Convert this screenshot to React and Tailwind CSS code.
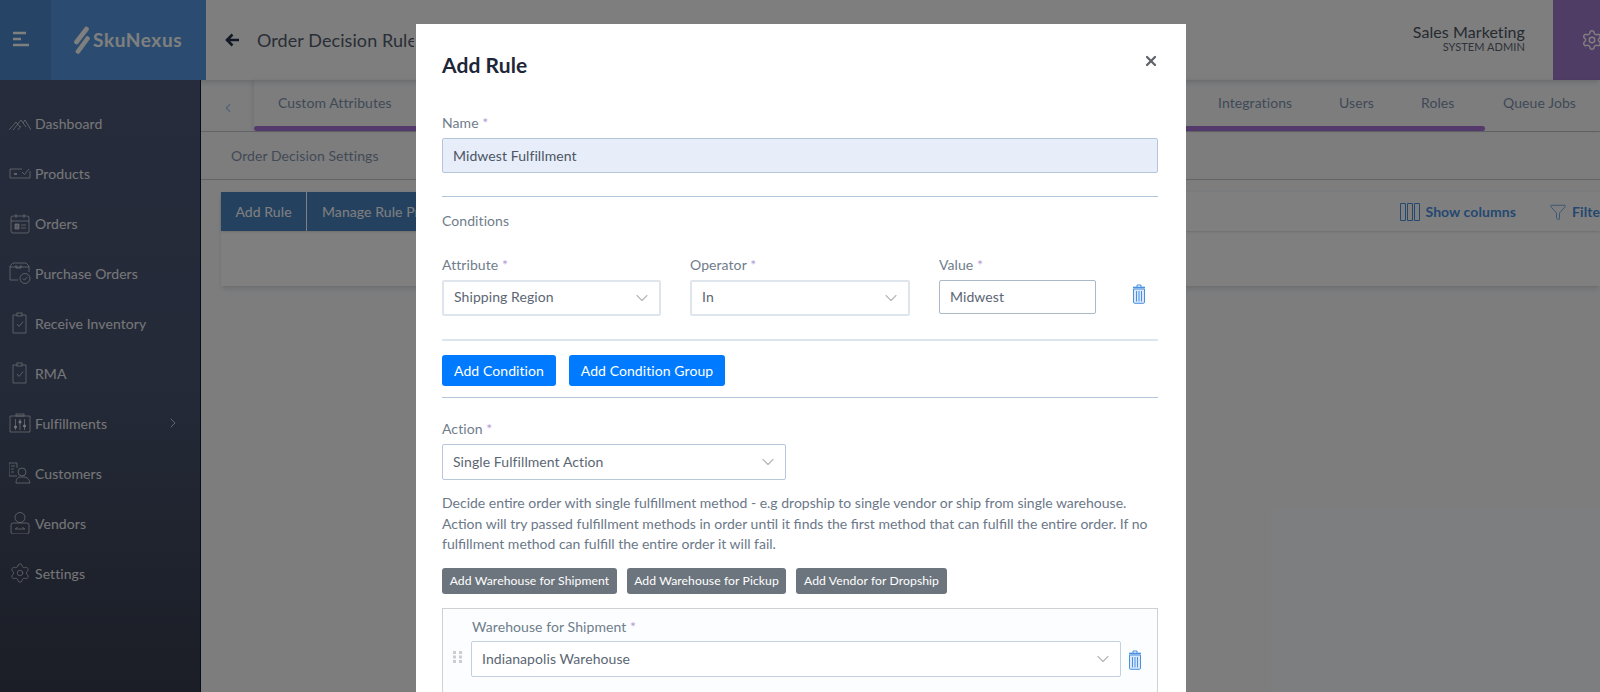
import { ChevronDown, ChevronLeft, ChevronRight, Settings, Filter, X } from 'lucide-react'

const sansFont = { fontFamily: 'Lato, "Open Sans", sans-serif', letterSpacing: '0.08px' }

function HamburgerIcon() {
  return (
    <svg width="18" height="16" viewBox="0 0 18 16" fill="none" stroke="#ffffff" strokeWidth="2.6">
      <path d="M1 2h13M1 8h8M1 14h16" />
    </svg>
  )
}

function LogoMark() {
  return (
    <svg width="17" height="28" viewBox="0 0 17 28" fill="none" stroke="#ffffff" strokeWidth="4.6" strokeLinecap="round">
      <path d="M13.5 3L3.5 16" />
      <path d="M14.5 12.5L5 25.5" />
    </svg>
  )
}

function NavIcon({ name }) {
  const common = { width: 22, height: 22, viewBox: '0 0 22 22', fill: 'none', stroke: '#ffffff', strokeOpacity: 0.75, strokeWidth: 0.9 }
  switch (name) {
    case 'dashboard':
      return (
        <svg {...common}>
          <path d="M0 18l7-8 4 5M4 18l8-10 5 7M9 18l3-4M14 11l2-3 6 10" />
        </svg>
      )
    case 'products':
      return (
        <svg {...common}>
          <path d="M13 7H1v9h20V9" />
          <path d="M5 12h3" strokeWidth="2" />
          <path d="M13 10l2.5 2.5L20 7" />
        </svg>
      )
    case 'orders':
      return (
        <svg {...common}>
          <rect x="2" y="4" width="18" height="17" rx="2" />
          <path d="M2 9h18M7 2v4M15 2v4" />
          <path d="M6 12h4v5H6z" fill="#ffffff" fillOpacity="0.6" />
          <path d="M12 13h5M12 16h5" />
        </svg>
      )
    case 'purchase':
      return (
        <svg {...common}>
          <path d="M9 18H1V4l3-3h13l3 3v6M1 5h19M7 3v3h5V3" />
          <circle cx="16" cy="16.5" r="5" />
          <path d="M13.8 16.5l1.6 1.6 2.8-3" />
        </svg>
      )
    case 'clipboard':
      return (
        <svg {...common}>
          <path d="M8 3H4v18h13V3h-4" />
          <rect x="8" y="1" width="5" height="3" />
          <path d="M8 12l2 2.5 4-5" />
        </svg>
      )
    case 'fulfillments':
      return (
        <svg {...common}>
          <path d="M1 4h20v16H1z" />
          <rect x="7" y="2" width="8" height="2" />
          <path d="M6.5 7v11M15.5 7v11M11 7v11" />
          <circle cx="6.5" cy="15" r="1.2" fill="#ffffff" />
          <circle cx="15.5" cy="14" r="1.2" fill="#ffffff" />
          <circle cx="11" cy="10" r="1.2" fill="#ffffff" />
        </svg>
      )
    case 'customers':
      return (
        <svg {...common}>
          <path d="M8 14H0V1h8v5M2 4h4M2 7h3M2 10h3" />
          <circle cx="13" cy="10" r="4" />
          <path d="M7 21c0-4 2-6 4-6h4c3 0 5 2 6 6z" />
        </svg>
      )
    case 'vendors':
      return (
        <svg {...common}>
          <circle cx="11" cy="5.5" r="5" />
          <path d="M4 11h14a2 2 0 0 1 2 2v7a2 2 0 0 1-2 2H4a2 2 0 0 1-2-2v-7a2 2 0 0 1 2-2z" />
          <path d="M6 17h10M8.5 15l-2 2M13.5 15l2 2" />
        </svg>
      )
    default:
      return <Settings size={22} strokeWidth={0.9} color="#ffffff" strokeOpacity={0.75} />
  }
}

function TrashIcon() {
  return (
    <svg width="14" height="20" viewBox="0 0 14 20" fill="none" stroke="#4a90e2" strokeWidth="1">
      <path d="M1 3.5h12" strokeWidth="1.6" />
      <path d="M5 3V1h4v2" />
      <path d="M1.5 5h11v13a1.3 1.3 0 0 1-1.3 1.3H2.8A1.3 1.3 0 0 1 1.5 18z" fill="#dbe9fa" />
      <path d="M4.5 7v10.5M7 7v10.5M9.5 7v10.5" />
    </svg>
  )
}

function Req({ children }) {
  return (
    <div className="h-5 text-[14px] leading-5 text-[#6f7d8c]">
      {children} <span className="text-[#b39ad6]">*</span>
    </div>
  )
}

function SelectBox({ value, className, textClass = 'mb-0.5' }) {
  return (
    <div className={`flex h-9 items-center justify-between rounded-[2px] border-2 border-[#dfe5ec] bg-white pl-[10px] pr-[7px] text-[14px] text-[#5b6673] ${className}`}>
      <span className={textClass}>{value}</span>
      <ChevronDown size={20} strokeWidth={1.4} color="#b5b8bc" />
    </div>
  )
}

const navItems = [
  ['Dashboard', 'dashboard'],
  ['Products', 'products'],
  ['Orders', 'orders'],
  ['Purchase Orders', 'purchase'],
  ['Receive Inventory', 'clipboard'],
  ['RMA', 'clipboard'],
  ['Fulfillments', 'fulfillments'],
  ['Customers', 'customers'],
  ['Vendors', 'vendors'],
  ['Settings', 'settings']
]

export default function App() {
  return (
    <div className="relative h-screen w-full overflow-hidden bg-[#fafbfd]" style={sansFont}>
      {/* page behind the modal */}
      <div className="flex h-20 bg-[#fdfdfd] shadow-md">
        <div className="flex w-[51px] items-center bg-[#4c8acc] pb-0.5 pl-3">
          <HamburgerIcon />
        </div>
        <div className="flex w-[155px] items-center gap-[3px] bg-[#5799e0] pl-[22px]">
          <LogoMark />
          <span className="text-[19px] font-bold tracking-[0.6px] text-white">SkuNexus</span>
        </div>
        <div className="flex flex-1 items-center pl-[19px]">
          <svg width="14" height="14" viewBox="0 0 14 14" fill="none" stroke="#24304a" strokeWidth="2.6">
            <path d="M14 7H2M7.5 1.5L2 7l5.5 5.5" />
          </svg>
          <span className="ml-[18px] w-[157px] overflow-hidden whitespace-nowrap text-[18px] text-[#525c6c]">Order Decision Rules</span>
        </div>
        <div className="mr-7 flex flex-col items-end justify-center pb-1">
          <span className="text-[16px] leading-[18px] text-[#4b5563]">Sales Marketing</span>
          <span className="text-[11px] leading-3 text-[#5d6775]">SYSTEM ADMIN</span>
        </div>
        <div className="flex w-[47px] items-center bg-[#a07acc] pl-[28px]">
          <Settings size={22} strokeWidth={1.6} color="#ffffff" className="shrink-0" />
        </div>
      </div>

      <div className="flex h-[612px]">
        <aside className="w-[201px] shrink-0 border-r border-[#0c1a3a] bg-gradient-to-b from-[#4c5876] via-[#485470] to-[#363c4c] pt-[18px]">
          {navItems.map(([label, icon]) => (
            <div key={label} className="flex h-[50px] items-center pl-[9px] text-[14px] text-white opacity-90">
              <span className="mr-[4px] flex w-[22px] justify-center"><NavIcon name={icon} /></span>
              <span>{label}</span>
              {label === 'Fulfillments' && <ChevronRight size={16} strokeWidth={1.2} className="ml-[58px]" />}
            </div>
          ))}
        </aside>

        <main className="min-w-0 flex-1 text-[14px]">
          <div className="flex h-[52px] border-b border-[#c5c8ce] text-[#7f93ad]">
            <div className="flex w-[53px] items-center justify-center pt-1"><ChevronLeft size={14} color="#a8c4e8" /></div>
            <div className="relative flex-1 pl-[24px] pt-3 shadow-[-2px_0_4px_rgba(0,0,0,0.08)]">
              <span>Custom Attributes</span>
              <div className="absolute bottom-0 left-0 h-[5px] w-[1231px] rounded-[3px] bg-[#a873d9]" />
              <span className="absolute left-[964px] top-3">Integrations</span>
              <span className="absolute left-[1085px] top-3">Users</span>
              <span className="absolute left-[1167px] top-3">Roles</span>
              <span className="absolute left-[1249px] top-3">Queue Jobs</span>
            </div>
          </div>
          <div className="flex h-12 items-center border-b border-[#c5c8ce] pl-[30px] text-[#8495ab]">Order Decision Settings</div>
          <div className="ml-5 mt-3 h-[94px] bg-white shadow-md">
            <div className="flex h-[39px] items-center shadow-sm">
              <span className="flex h-full w-[85px] items-center justify-center bg-[#4a83c0] text-white">Add Rule</span>
              <span className="ml-px flex h-full w-[109px] items-center overflow-hidden whitespace-nowrap bg-[#4a83c0] pl-[15px] text-white">Manage Rule Presets</span>
              <div className="ml-auto flex items-center overflow-hidden text-[14px] text-[#4a90e2]">
                <svg width="20" height="18" viewBox="0 0 20 18" fill="none" stroke="#4a90e2" strokeWidth="1" className="mr-[5px]">
                  <path d="M.5.5h5v17h-5zM7.5.5h5v17h-5zM14.5.5h5v17h-5z" />
                </svg>
                <span className="font-bold">Show columns</span>
                <Filter size={18} strokeWidth={1} className="ml-[33px] mr-[5px]" />
                <span className="w-[28px] overflow-hidden font-bold">Filter</span>
              </div>
            </div>
          </div>
        </main>
      </div>

      {/* modal overlay */}
      <div className="absolute inset-0 flex justify-center bg-black/50 pl-[2px] pt-6">
        <div className="h-[800px] w-[770px] shrink-0 bg-white pl-[26px] pr-[28px] pt-7">
          <div className="flex h-[26px] items-center justify-between">
            <h1 className="text-[21px] font-bold text-[#1e2738]">Add Rule</h1>
            <X size={16} strokeWidth={3.4} color="#5f646b" className="mb-2 mr-[-1px]" />
          </div>

          <div className="mt-[35px]"><Req>Name</Req></div>
          <div className="mt-[5px] flex h-[35px] items-center rounded-[2px] border border-[#b5c6da] bg-[#e7eefa] pl-[10px] text-[14px] text-[#4b5563]">
            Midwest Fulfillment
          </div>
          <div className="mt-[23px] h-px bg-[#b3c6dc]" />
          <div className="mt-[14px] h-5 text-[14px] leading-5 text-[#6f7d8c]">Conditions</div>

          <div className="mt-6 flex">
            <div className="w-[219px]">
              <Req>Attribute</Req>
              <SelectBox value="Shipping Region" className="mt-[5px]" textClass="mb-1" />
            </div>
            <div className="ml-[29px] w-[220px]">
              <Req>Operator</Req>
              <SelectBox value="In" className="mt-[5px]" textClass="mb-1" />
            </div>
            <div className="ml-[29px] w-[157px]">
              <Req>Value</Req>
              <div className="mt-[5px] flex h-[34px] items-center rounded-[2px] border border-[#aab8c8] pb-0.5 pl-[10px] text-[14px] text-[#5b6673]">Midwest</div>
            </div>
            <div className="ml-[36px] mt-[29px]"><TrashIcon /></div>
          </div>

          <div className="mt-[23px] h-0.5 bg-[#dfe5ec]" />
          <div className="mt-[14px] flex gap-[13px]">
            <button className="h-[31px] w-[114px] rounded-[3px] bg-[#007bff] text-[14px] text-white">Add Condition</button>
            <button className="h-[31px] w-[156px] rounded-[3px] bg-[#007bff] text-[14px] text-white">Add Condition Group</button>
          </div>
          <div className="mt-[11px] h-px bg-[#b3c6dc]" />

          <div className="mt-[21px]"><Req>Action</Req></div>
          <SelectBox value="Single Fulfillment Action" className="mt-[5px] w-[344px] border! border-[#b8c8da]!" />
          <p className="mt-[13px] text-[14px] leading-[20.5px] tracking-normal text-[#6b7889]">
            Decide entire order with single fulfillment method - e.g dropship to single vendor or ship from single warehouse.
            <br />
            Action will try passed fulfillment methods in order until it finds the first method that can fulfill the entire order. If no
            <br />
            fulfillment method can fulfill the entire order it will fail.
          </p>

          <div className="mt-[13px] flex gap-[10px] text-[12.2px] text-white">
            <button className="h-[26px] w-[175px] rounded-[3px] bg-[#6c757d] pt-0.5">Add Warehouse for Shipment</button>
            <button className="h-[26px] w-[159px] rounded-[3px] bg-[#6c757d] pt-0.5">Add Warehouse for Pickup</button>
            <button className="h-[26px] w-[151px] rounded-[3px] bg-[#6c757d] pt-0.5">Add Vendor for Dropship</button>
          </div>

          <div className="mt-[14px] h-[150px] border border-[#cfd2d4] bg-[#fcfdfe] pt-2">
            <div className="pl-[29px]"><Req>Warehouse for Shipment</Req></div>
            <div className="mt-1 flex items-center">
              <svg width="10" height="12" viewBox="0 0 10 12" fill="#c9ced4" className="ml-[10px] mr-[8px] mb-[3px] shrink-0">
                <rect x="0" y="0" width="3" height="3" /><rect x="6" y="0" width="3" height="3" />
                <rect x="0" y="4.5" width="3" height="3" /><rect x="6" y="4.5" width="3" height="3" />
                <rect x="0" y="9" width="3" height="3" /><rect x="6" y="9" width="3" height="3" />
              </svg>
              <SelectBox value="Indianapolis Warehouse" className="w-[650px] border! border-[#c3d0e0]!" textClass="" />
              <div className="ml-[7px] mt-[2px]"><TrashIcon /></div>
            </div>
          </div>
        </div>
      </div>
    </div>
  )
}
